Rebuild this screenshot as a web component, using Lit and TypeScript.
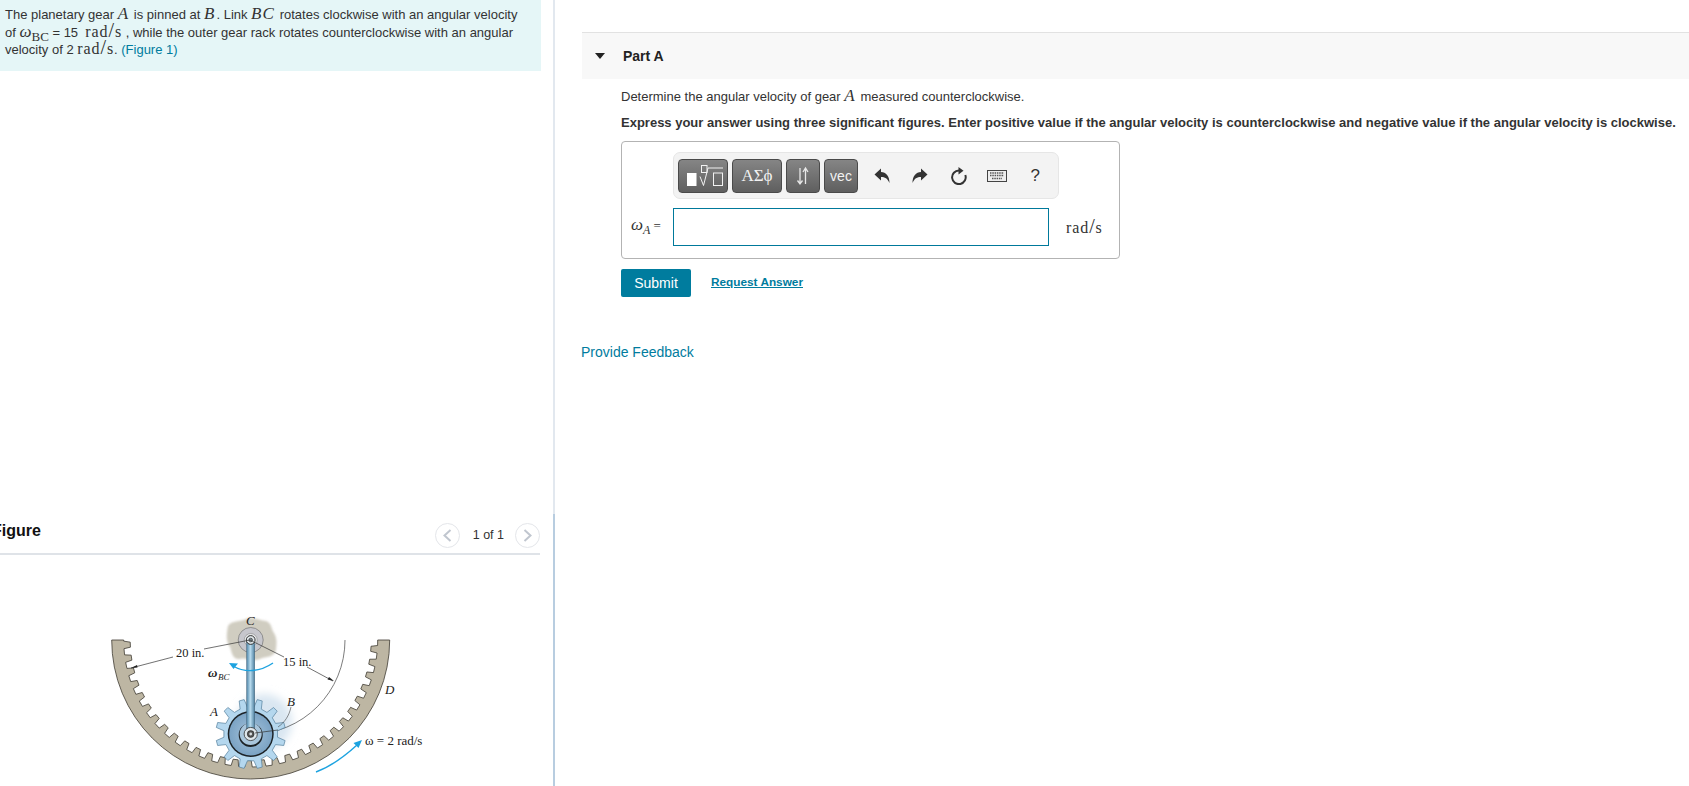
import { LitElement, html, css, svg } from "lit";
import { customElement } from "lit/decorators.js";

const CX = 190.7, CY = 50, GX = 190.7, GY = 144;
const pt = (cx: number, cy: number, r: number, deg: number) => {
  const a = (deg * Math.PI) / 180;
  return `${(cx + r * Math.cos(a)).toFixed(2)} ${(cy + r * Math.sin(a)).toFixed(2)}`;
};

function rackPath() {
  const R = 139, root = 127, tip = 120.5;
  let d = `M${pt(CX, CY, R, 180)} A${R} ${R} 0 0 0 ${pt(CX, CY, R, 0)} L${pt(CX, CY, root, 0)} `;
  const pitch = 6.2;
  for (let a = pitch * 0.4; a < 178; a += pitch) {
    d += `L${pt(CX, CY, root, a)} L${pt(CX, CY, tip, a + 0.5)} L${pt(CX, CY, tip, a + 2.9)} L${pt(CX, CY, root, a + 3.4)} `;
  }
  d += `L${pt(CX, CY, root, 180)} Z`;
  return d;
}

function gearPath() {
  const root = 27, tip = 35, n = 12, step = 360 / n;
  let d = "";
  for (let i = 0; i < n; i++) {
    const a = i * step + 15;
    d += `${i ? "L" : "M"}${pt(GX, GY, root, a - step * 0.27)} L${pt(GX, GY, tip, a - step * 0.14)} L${pt(GX, GY, tip, a + step * 0.14)} L${pt(GX, GY, root, a + step * 0.27)} `;
  }
  return d + "Z";
}

const figure = svg`
  <defs>
    <linearGradient id="arm" x1="0" x2="1" y1="0" y2="0">
      <stop offset="0" stop-color="#4f86a8"/><stop offset=".45" stop-color="#b9dcef"/><stop offset="1" stop-color="#4d7f9f"/>
    </linearGradient>
    <radialGradient id="disc"><stop offset="0" stop-color="#a6c4dc"/><stop offset="1" stop-color="#7ba3c4"/></radialGradient>
    <filter id="soft" x="-10%" y="-10%" width="120%" height="120%"><feGaussianBlur stdDeviation="0.3"/></filter>
    <filter id="glow" x="-50%" y="-50%" width="200%" height="200%"><feGaussianBlur stdDeviation="4"/></filter>
    <filter id="bl" x="-20%" y="-20%" width="140%" height="140%"><feGaussianBlur stdDeviation="1"/></filter>
  </defs>
  <g filter="url(#soft)">
    <path d="M168 36 C172 30 180 32 186 29 C194 26 200 31 206 31 C212 33 211 39 214 43 C218 50 216 56 216 60 C214 68 206 66 200 69 C192 72 186 67 180 69 C172 70 172 62 170 57 C165 50 167 42 168 36Z" fill="#d0cdc1" filter="url(#bl)"/>
    <path d=${rackPath()} fill="#bdb6a3" stroke="#3f3b32" stroke-width=".8"/>
    <circle cx="204" cy="132" r="28" fill="#d9e6f1" filter="url(#glow)"/>
    <path d="M285 50 A94.3 94.3 0 0 1 190.7 144.3" fill="none" stroke="#444" stroke-width=".7"/>
    <path d=${gearPath()} fill="#b4d7ee" stroke="#557f9c" stroke-width=".7"/>
    <circle cx=${GX} cy=${GY} r="23" fill="#1c2226"/>
    <circle cx=${GX} cy=${GY} r="21.500" fill="url(#disc)"/>
    <circle cx=${GX} cy=${GY + 1} r="12" fill="#1c2226"/>
    <circle cx=${GX} cy=${GY} r="11" fill="#a9c6dc"/>
    <circle cx=${GX} cy="50" r="12.500" fill="#c6c6cc" stroke="#666" stroke-width=".6"/>
    <circle cx=${GX} cy="50" r="6.500" fill="#e6e8ea" stroke="#777" stroke-width=".5"/>
    <rect x="186.700" y="52" width="8" height="92" fill="url(#arm)" stroke="#3f5f75" stroke-width=".5"/>
    <circle cx=${GX} cy="50" r="4.400" fill="#dfe6ea" stroke="#333" stroke-width="1"/>
    <circle cx=${GX} cy="50" r="1.800" fill="#7c8a92" stroke="#222" stroke-width=".6"/>
    <circle cx=${GX} cy=${GY} r="6.600" fill="#dfe7ec" stroke="#333" stroke-width=".8"/>
    <circle cx=${GX} cy=${GY} r="3.400" fill="#555" stroke="#222" stroke-width=".6"/>
    <circle cx=${GX} cy=${GY} r="1.400" fill="#d8dde0"/>
    <path d="M71 78 L113 67 M144 59 L190 50 M190 50 L224 67 M247 77 L273 91 M195 143 L218 140" fill="none" stroke="#333" stroke-width=".7"/>
    <path d="M71 78 L77 75 L77.500 77.500Z M274 91 L267.500 89.500 L269 87Z" fill="#222"/>
    <path d="M231 117 C229 126 225 132 218 137" fill="none" stroke="#444" stroke-width=".6"/>
    <path d="M213 73 C200 82 185 83 173 76" fill="none" stroke="#1ea3e0" stroke-width="1.400"/>
    <path d="M169 73 L178 73.500 L173.500 79Z" fill="#1ea3e0"/>
    <path d="M256 182 C272 176 285 166 297 155" fill="none" stroke="#1ea3e0" stroke-width="1.400"/>
    <path d="M302 150 L298.500 158 L293.500 153Z" fill="#1ea3e0"/>
  </g>
  <g class="lbl">
    <text x="186" y="35" class="it">C</text>
    <text x="116" y="67">20 in.</text>
    <text x="223" y="76">15 in.</text>
    <text x="148" y="87" class="w">ω</text><text x="158" y="90" class="sub">BC</text>
    <text x="150" y="126" class="it">A</text>
    <text x="227" y="116" class="it">B</text>
    <text x="325" y="104" class="it">D</text>
    <text x="305" y="155" class="big">ω = 2 rad/s</text>
  </g>
`;

const undo = svg`<path d="M0.500 6.500 L7 0.500 V4 C12 4 15.500 8 15.500 15 C13.500 10.500 11 9 7 9 V12.500Z"/>`;

@customElement("app-root")
export class AppRoot extends LitElement {
  static styles = css`
    :host { display: block; width: 1689px; height: 786px; overflow: hidden; background: #fff;
      font-family: "Liberation Sans", Arial, sans-serif; color: #333; font-size: 13px; }
    .page { display: grid; grid-template-columns: 555px 1fr; height: 786px; }
    .left { display: flex; flex-direction: column; height: 786px; overflow: hidden; }
    .top { height: 514px; border-right: 2px solid #e2e8ef; box-sizing: border-box; }
    .intro { width: 541px; height: 71px; box-sizing: border-box; background: #e5f6f7; padding: 6px 5px 0; line-height: 17.5px; white-space: nowrap; }
    .bottom { flex: 1; border-right: 2px solid #b8cde0; box-sizing: border-box; }
    .fhead { width: 540px; height: 41px; box-sizing: border-box; border-bottom: 2px solid #dfe3e8; display: flex; align-items: center; }
    .ftitle { font-size: 16px; font-weight: bold; color: #111; margin-left: -8px; flex: 1; padding-bottom: 5px; }
    .pager { display: flex; align-items: center; font-size: 12.500px; padding-top: 3px; }
    .count { margin: 0 11px 0 13px; }
    .circ { width: 25px; height: 25px; box-sizing: border-box; border: 1px solid #e4e6ea; border-radius: 50%; display: flex; align-items: center; justify-content: center; }
    .circ svg { width: 9px; height: 13px; fill: none; stroke: #c0c6cf; stroke-width: 2; }
    .figure { display: block; width: 400px; height: 196px; margin: 35px 0 0 60px; }
    .lbl text { font-family: "Liberation Serif", serif; font-size: 12.500px; fill: #222; }
    .lbl .big { font-size: 13px; }
    .lbl .it { font-style: italic; font-size: 13px; }
    .lbl .w { font-style: italic; font-weight: bold; font-size: 13px; }
    .lbl .sub { font-style: italic; font-size: 9px; }
    .right { padding-top: 32px; min-width: 0; }
    .phead { margin-left: 27px; height: 47px; box-sizing: border-box; background: #f8f8f8; border-top: 1px solid #e2e2e2; display: flex; align-items: center; }
    .tri { width: 0; height: 0; border-left: 5.500px solid transparent; border-right: 5.500px solid transparent; border-top: 6px solid #222; margin-left: 13px; }
    .ptitle { font-weight: bold; font-size: 14px; color: #222; margin-left: 18px; }
    .body { margin-left: 66px; }
    .q { margin: 9px 0 0; line-height: 17px; white-space: nowrap; }
    .q.b { margin-top: 9px; font-weight: bold; }
    .m { font-family: "Liberation Serif", serif; font-style: italic; font-size: 17px; line-height: 0; letter-spacing: 1.100px; margin-right: 1px; }
    .om { font-family: "Liberation Serif", serif; font-style: italic; font-size: 17px; line-height: 0; }
    .r { font-family: "Liberation Serif", serif; font-size: 16px; line-height: 0; letter-spacing: .9px; }
    .r i { font-size: 20px; font-style: normal; font-weight: 400; line-height: 0; }
    .intro sub { font-family: "Liberation Serif", serif; font-size: 13px; line-height: 0; }
    a { color: #007c9e; text-decoration: none; }
    .box { width: 499px; height: 118px; box-sizing: border-box; margin-top: 10px; border: 1px solid #b3b3b3; border-radius: 4px; padding: 10px 0 0 51px; position: relative; }
    .tools { width: 386px; height: 47px; box-sizing: border-box; background: #f3f3f3; border: 1px solid #e6e6e6; border-radius: 7px; display: flex; align-items: center; padding-left: 4px; gap: 4px; }
    .btn { flex: none; height: 34px; box-sizing: border-box; border: 1px solid #4a4a4a; border-radius: 4px; background: linear-gradient(#858585, #5f5f5f); color: #f2f2f2; display: flex; align-items: center; justify-content: center; }
    .wide { width: 50px; }
    .narrow { width: 34px; }
    .btn.vec { font-size: 14px; }
    .btn.sym { font-family: "Liberation Serif", serif; font-size: 17px; }
    .btn svg { display: block; }
    .ico { flex: none; display: flex; align-items: center; margin-left: 1px; }
    .ico > * { width: 38.300px; display: flex; justify-content: center; align-items: center; }
    .ico svg { fill: #333; }
    .q-mark { font-size: 17px; color: #333; }
    .line { display: flex; align-items: center; margin-top: 9px; }
    .lab { position: absolute; left: 9px; top: 73px; font-family: "Liberation Serif", serif; color: #333; font-size: 13px; white-space: nowrap; }
    .lab em { font-size: 17px; }
    .lab sub { font-size: 12px; font-style: italic; line-height: 0; }
    input { width: 376px; height: 38px; box-sizing: border-box; border: 1px solid #00799b; outline: none; padding: 0; margin: 0; background: #fff; display: block; }
    .unit { margin-left: 17px; color: #333; }
    .actions { display: flex; align-items: center; margin-top: 10px; }
    .submit { width: 70px; height: 28px; background: #007c9e; color: #fff; border: 0; border-radius: 2px; font: 14px "Liberation Sans", Arial, sans-serif; padding: 0; }
    .req { margin-left: 20px; font-weight: bold; text-decoration: underline; font-size: 11.800px; position: relative; top: -1px; }
    .fb { display: block; margin: 47px 0 0 26px; font-size: 14px; }
  `;

  render() {
    return html`<div class="page">
      <div class="left">
        <div class="top">
          <div class="intro">The planetary gear <span class="m">A</span> is pinned at <span class="m">B</span>. Link <span class="m">BC</span> rotates clockwise with an angular velocity<br />of <span class="om">ω</span><sub>BC</sub> = 15 &nbsp;<span class="r">rad<i>/</i>s</span> , while the outer gear rack rotates counterclockwise with an angular<br />velocity of 2 <span class="r">rad<i>/</i>s</span>. <a href="#">(Figure 1)</a></div>
        </div>
        <div class="bottom">
          <div class="fhead">
            <div class="ftitle">Figure</div>
            <div class="pager">
              <span class="circ"><svg viewBox="0 0 9 13"><path d="M7.500 1 L1.500 6.500 L7.500 12" /></svg></span>
              <span class="count">1 of 1</span>
              <span class="circ"><svg viewBox="0 0 9 13"><path d="M1.500 1 L7.500 6.500 L1.500 12" /></svg></span>
            </div>
          </div>
          <svg class="figure" viewBox="0 0 400 196" role="img" aria-label="Planetary gear diagram">${figure}</svg>
        </div>
      </div>
      <div class="right">
        <div class="phead"><span class="tri"></span><span class="ptitle">Part A</span></div>
        <div class="body">
          <p class="q">Determine the angular velocity of gear <span class="m">A</span> measured counterclockwise.</p>
          <p class="q b">Express your answer using three significant figures. Enter positive value if the angular velocity is counterclockwise and negative value if the angular velocity is clockwise.</p>
          <div class="box">
            <div class="tools">
              <span class="btn wide"><svg width="48" height="32" viewBox="0 0 48 32" fill="none" stroke="#f2f2f2"><rect x="8" y="13" width="9.500" height="13" fill="#fff" stroke="none"/><rect x="22.500" y="5.500" width="5.500" height="7" /><path d="M21 16.500 L24.500 25.500 L29 8 H44" /><rect x="34.500" y="13" width="9" height="12.500" /></svg></span>
              <span class="btn wide sym">ΑΣϕ</span>
              <span class="btn narrow"><svg width="18" height="20" viewBox="0 0 18 20" fill="none" stroke="#e8e8e8" stroke-width="1.300"><path d="M6 2 V17 M3.500 14.500 L6 18 L8.500 14.500 M11.500 18 V3 M9 6 L11.500 2 L14 6" /></svg></span>
              <span class="btn narrow vec">vec</span>
              <div class="ico">
                <span><svg width="16" height="16" viewBox="0 0 16 16">${undo}</svg></span>
                <span><svg width="16" height="16" viewBox="0 0 16 16"><g transform="matrix(-1 0 0 1 16 0)">${undo}</g></svg></span>
                <span><svg width="18" height="18" viewBox="0 0 18 18"><path d="M9 3.500 A6.800 6.800 0 1 0 15.300 8" fill="none" stroke="#333" stroke-width="2"/><path d="M8.500 0 L13.500 3.800 L8.500 7.500Z"/></svg></span>
                <span><svg width="20" height="12" viewBox="0 0 20 12"><rect x=".5" y=".5" width="19" height="11" fill="#eee" stroke="#444"/><path d="M3 3 H17 M3 5.500 H17 M5 8.500 H15" stroke="#555" stroke-width="1.300" stroke-dasharray="1.500 .8"/></svg></span>
                <span class="q-mark">?</span>
              </div>
            </div>
            <div class="line">
              <span class="lab"><em>ω</em><sub>A</sub> =</span>
              <input aria-label="answer" />
              <span class="unit r">rad<i>/</i>s</span>
            </div>
          </div>
          <div class="actions"><button class="submit">Submit</button><a class="req" href="#">Request Answer</a></div>
        </div>
        <a class="fb" href="#">Provide Feedback</a>
      </div>
    </div>`;
  }
}
